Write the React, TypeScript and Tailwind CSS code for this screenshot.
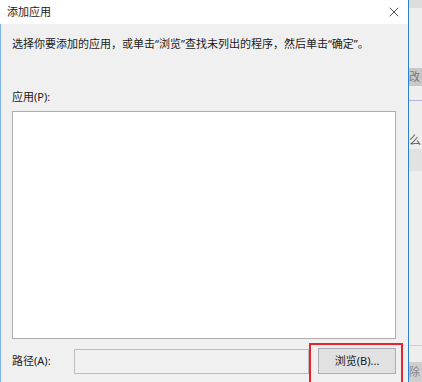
import { X } from "lucide-react";

const font = { fontFamily: '"Noto Sans", "Noto Sans CJK SC", sans-serif' };

function SideStrip() {
  // bit of the window behind the dialog
  return (
    <div className="flex w-[13px] flex-col bg-[#eeeeee]">
      <div className="h-[8px] bg-[#dcdcdc]" />
      <div className="h-[60px]" />
      <div className="h-[18px] overflow-hidden bg-[#c8c8c8] text-[11px] leading-[18px] text-[#777]">改</div>
      <div className="h-[14px]" />
      <div className="h-px bg-[#b7b3dc]" />
      <div className="h-[32px]" />
      <div className="h-[16px] overflow-hidden text-[12px] leading-[16px] text-[#555]">么</div>
      <div className="h-[22px] bg-[#e2e2e2]" />
      <div className="flex-1" />
      <div className="h-px bg-[#cfcfcf]" />
      <div className="h-[16px]" />
      <div className="h-[20px] overflow-hidden bg-[#cfcfcf] text-[11px] leading-[20px] text-[#888]">除</div>
    </div>
  );
}

export default function App() {
  return (
    <div className="flex h-[382px] w-[422px] overflow-hidden bg-white" style={font}>
      <div className="relative flex w-[409px] flex-col border-r border-[#2b7fd4]">
        {/* title bar */}
        <div className="flex h-[24px] shrink-0 items-center justify-between bg-white pl-[7px] pr-[6px]">
          <span className="text-[11px] text-[#1a1a1a]">添加应用</span>
          <X size={16} strokeWidth={1.2} color="#222" />
        </div>

        {/* body */}
        <div className="flex flex-1 flex-col border-l border-[#7fb2e6] bg-[#f0f0f0] pl-[11px] pr-[12px] text-[11px] text-[#1a1a1a]">
          <p className="mt-[12px] whitespace-nowrap leading-[16px]">选择你要添加的应用，或单击“浏览”查找未列出的程序，然后单击“确定”。</p>
          <p className="mt-[37px] leading-[16px]">应用(P):</p>
          <div className="mt-[6px] h-[228px] shrink-0 border border-[#adadad] bg-white" />
          <div className="mt-[9px] flex items-center">
            <span className="w-[62px] leading-[16px]">路径(A):</span>
            <div className="h-[25px] w-[236px] border border-[#bcbcbc] bg-[#f0f0f0]" />
            <button className="ml-[9px] h-[26px] w-[78px] border border-[#adadad] bg-[#e1e1e1] text-[11px] text-[#1a1a1a]">
              浏览(B)...
            </button>
          </div>
        </div>

        {/* red highlight annotation */}
        <div className="absolute left-[309px] top-[343px] h-[42px] w-[94px] border-2 border-[#e8242b]" />
      </div>
      <SideStrip />
    </div>
  );
}
